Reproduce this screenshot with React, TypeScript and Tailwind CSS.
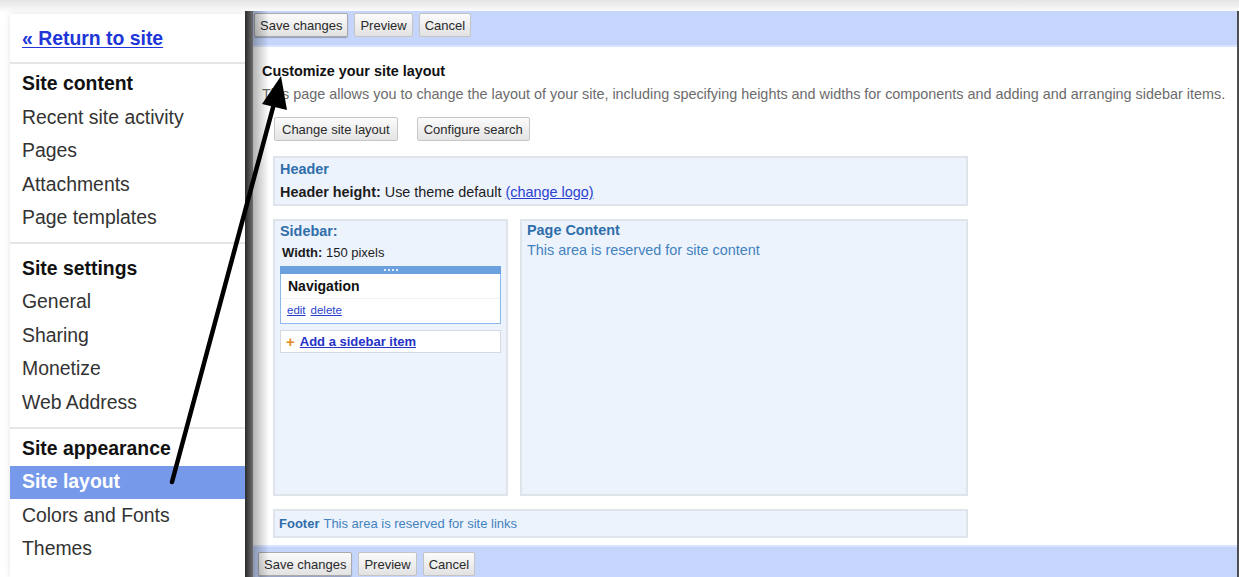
import React from "react";

const navSections = [
  {
    title: "Site content",
    items: ["Recent site activity", "Pages", "Attachments", "Page templates"],
    pt: "pt-[3px]",
    pb: "pb-[7px]",
  },
  {
    title: "Site settings",
    items: ["General", "Sharing", "Monetize", "Web Address"],
    pt: "pt-[8px]",
    pb: "pb-[8px]",
  },
];

function Divider() {
  return <div className="h-[2px] bg-[#e6e6e6]" />;
}

function Row({ children, bold }: { children: React.ReactNode; bold?: boolean }) {
  return (
    <div
      className={`h-[33.5px] flex items-center pl-[12px] text-[19.4px] ${
        bold ? "font-bold text-[#111]" : "text-[#333]"
      }`}
    >
      {children}
    </div>
  );
}

function Btn({ label, strong }: { label: string; strong?: boolean }) {
  return (
    <button
      className={`h-[24px] px-[5px] text-[13px] leading-none text-[#2a2a2a] rounded-[2px] border bg-gradient-to-b from-[#fbfbfb] to-[#e2e2e2] ${
        strong ? "border-[#a9a9a9] shadow-[0_1px_1px_rgba(0,0,0,0.25)]" : "border-[#c4c4c4]"
      }`}
    >
      {label}
    </button>
  );
}

function Toolbar({ className }: { className: string }) {
  return (
    <div className={`flex gap-[6px] bg-[#c5d5fb] ${className}`}>
      <Btn label="Save changes" strong />
      <Btn label="Preview" />
      <Btn label="Cancel" />
    </div>
  );
}

function Sidebar() {
  return (
    <aside className="ml-[10px] mt-[14px] w-[235px] shrink-0 bg-white shadow-[0_0_6px_rgba(0,0,0,0.12)]">
      <div className="h-[48px] flex items-center pl-[12px] pt-[1px]">
        <a className="text-[19.4px] font-bold text-[#2036d8] underline underline-offset-2">
          « Return to site
        </a>
      </div>
      <Divider />
      {navSections.map((s) => (
        <div key={s.title}>
          <div className={`${s.pt} ${s.pb}`}>
            <Row bold>{s.title}</Row>
            {s.items.map((it) => (
              <Row key={it}>{it}</Row>
            ))}
          </div>
          <Divider />
        </div>
      ))}
      <div className="pt-[3px]">
        <Row bold>Site appearance</Row>
        <div className="h-[33px] flex items-center pl-[12px] text-[19.4px] font-bold text-white bg-[#7799ea]">
          Site layout
        </div>
        <Row>Colors and Fonts</Row>
        <Row>Themes</Row>
      </div>
    </aside>
  );
}

function LayoutBox({ className, children }: { className: string; children?: React.ReactNode }) {
  return (
    <div className={`bg-[#edf3fd] border-2 border-[#dfe3ea] ${className}`}>{children}</div>
  );
}

function NavigationWidget() {
  return (
    <div className="mx-[3px] mt-[5px]">
      <div className="h-[8px] bg-[#6ba1de] flex items-center justify-center gap-[2px]">
        {[0, 1, 2, 3].map((d) => (
          <span key={d} className="w-[2px] h-[2px] bg-white/80" />
        ))}
      </div>
      <div className="bg-white border border-t-0 border-[#8db8ea]">
        <div className="h-[25px] flex items-center pl-[7px] text-[14px] font-bold text-[#111] border-b border-[#eef2f8]">
          Navigation
        </div>
        <div className="h-[24px] flex items-center gap-[5px] pl-[6px] text-[11.5px] text-[#2a3fd0] underline">
          <span>edit</span>
          <span>delete</span>
        </div>
      </div>
      <div className="mt-[6px] h-[23px] bg-white border border-[#d6d9de] flex items-center pl-[5px] gap-[5px] text-[13px]">
        <span className="text-[#e58a1f] font-bold text-[15px] leading-none">+</span>
        <span className="font-bold text-[#2433c8] underline">Add a sidebar item</span>
      </div>
    </div>
  );
}

function MainPanel() {
  return (
    <main className="mt-[11px] flex-1 flex min-w-0">
      <div className="w-[8px] shrink-0 bg-gradient-to-r from-[#2c2c2c] to-[#6e6e6e]" />
      <div className="relative flex-1 flex flex-col border-r-2 border-[#4d4d4d] bg-white">
        <Toolbar className="pt-[2px] pb-[8px] pl-[1px] border-b-2 border-[#d9e3fd]" />
        <div className="flex-1 pl-[9px] text-[14.4px]">
          <h1 className="mt-[16px] h-[16px] leading-[16px] font-bold text-[#111]">
            Customize your site layout
          </h1>
          <p className="mt-[7px] h-[16px] leading-[16px] whitespace-nowrap text-[#6b6b6b]">
            This page allows you to change the layout of your site, including specifying heights and widths for components and adding and arranging sidebar items.
          </p>
          <div className="ml-[12px] mt-[15px] flex gap-[19px]">
            <button className="h-[24px] px-[7px] text-[13px] leading-none text-[#2a2a2a] rounded-[2px] border border-[#c6c6c6] bg-gradient-to-b from-[#fbfbfb] to-[#e4e4e4]">
              Change site layout
            </button>
            <button className="h-[24px] px-[6px] text-[13px] leading-none text-[#2a2a2a] rounded-[2px] border border-[#c6c6c6] bg-gradient-to-b from-[#fbfbfb] to-[#e4e4e4]">
              Configure search
            </button>
          </div>

          <div className="ml-[11px] w-[695px]">
            <LayoutBox className="mt-[15px] h-[50px] px-[5px] pt-[3px]">
              <div className="h-[16px] leading-[16px] font-bold text-[#2f6eaa]">Header</div>
              <div className="mt-[7px] h-[16px] leading-[16px] text-[#1c1c1c]">
                <span className="font-bold">Header height:</span> Use theme default{" "}
                <a className="text-[#2a3fd0] underline">(change logo)</a>
              </div>
            </LayoutBox>

            <div className="mt-[13px] flex gap-[12px] h-[277px]">
              <LayoutBox className="w-[235px] shrink-0 px-[2px] pt-[2px]">
                <div className="pl-[3px] h-[16px] leading-[16px] font-bold text-[#2f6eaa]">Sidebar:</div>
                <div className="pl-[5px] mt-[6px] h-[16px] leading-[16px] text-[13px] text-[#1c1c1c]">
                  <span className="font-semibold">Width:</span> 150 pixels
                </div>
                <NavigationWidget />
              </LayoutBox>
              <LayoutBox className="flex-1 px-[5px] pt-[1px]">
                <div className="h-[16px] leading-[16px] font-bold text-[#2f6eaa]">Page Content</div>
                <div className="mt-[4px] h-[16px] leading-[16px] text-[#4282bf]">
                  This area is reserved for site content
                </div>
              </LayoutBox>
            </div>

            <LayoutBox className="mt-[13px] h-[29px] px-[4px] flex items-center text-[13px]">
              <span className="font-bold text-[#2f6eaa]">Footer</span>
              <span className="ml-[4px] text-[#4282bf]">This area is reserved for site links</span>
            </LayoutBox>
          </div>
        </div>
        <Toolbar className="h-[32px] pt-[5px] pl-[5px] border-t-2 border-[#d9e3fd]" />
        <div className="pointer-events-none absolute inset-y-0 left-0 w-[16px] bg-gradient-to-r from-black/30 to-transparent" />
      </div>
    </main>
  );
}

export default function App() {
  return (
    <div className="relative w-[1239px] h-[577px] overflow-hidden flex bg-[linear-gradient(to_bottom,#e4e4e4_0px,#ffffff_13px)] font-['Liberation_Sans',Arial,sans-serif]">
      <Sidebar />
      <MainPanel />
      {/* pointer arrow drawn over both panels */}
      <svg
        className="pointer-events-none absolute inset-0"
        width="1239"
        height="577"
        viewBox="0 0 1239 577"
      >
        <line x1="172" y1="482" x2="275" y2="100" stroke="#000" strokeWidth="4.5" strokeLinecap="round" />
        <polygon points="281,76 262,104 287,110" fill="#000" />
      </svg>
    </div>
  );
}
